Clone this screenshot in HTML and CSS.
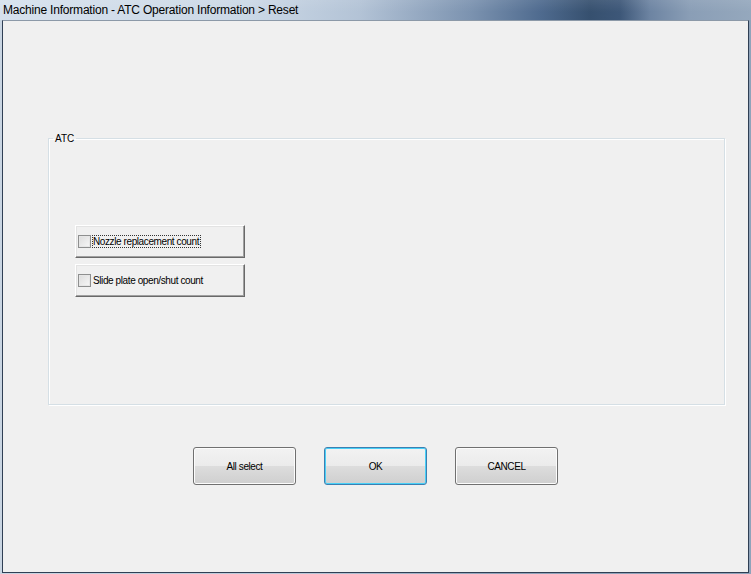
FILE: index.html
```html
<!DOCTYPE html>
<html>
<head>
<meta charset="utf-8">
<link rel="stylesheet" href="styles.css">
</head>
<body>
<div class="window">
  <div class="titlebar"><span class="title">Machine Information - ATC Operation Information &gt; Reset</span></div>
  <div class="client">
    <fieldset class="group">
      <legend class="group-label">ATC</legend>
      <div class="options">
        <label class="opt"><span class="box"></span><span class="opt-text focused">Nozzle replacement count</span></label>
        <label class="opt"><span class="box"></span><span class="opt-text">Slide plate open/shut count</span></label>
      </div>
    </fieldset>
    <div class="actions">
      <button class="btn">All select</button>
      <button class="btn default">OK</button>
      <button class="btn">CANCEL</button>
    </div>
  </div>
</div>
</body>
</html>
```
FILE: styles.css
```css
html, body {
  margin: 0;
  padding: 0;
  background: #f0f0f0;
}
.window {
  width: 751px;
  height: 574px;
  box-sizing: border-box;
  padding: 0 2px 1px 2px;
  background: linear-gradient(to right, #c9d5e2 0, #b9c8d8 300px, #8fa3ba 500px, #8fa3ba 751px);
  display: flex;
  flex-direction: column;
  font-family: "Liberation Sans", Arial, sans-serif;
}
.titlebar {
  height: 20px;
  margin: 0 -2px;
  background:
    linear-gradient(to bottom, rgba(255,255,255,0.08), rgba(255,255,255,0) 60%),
    linear-gradient(to right, #d6e1ed 0, #cbd8e6 250px, #b3c3d6 360px, #7c93b0 470px, #4f6b8f 540px, #36506f 590px, #3d5778 620px, #6d84a2 650px, #8a9eb6 690px, #95a8bd 751px);
  display: flex;
  align-items: center;
}
.title {
  padding-left: 3px;
  font-size: 12px;
  color: #000;
  letter-spacing: -0.2px;
}
.client {
  flex: 1;
  background: #f0f0f0;
  border: 1px solid #2f3f54;
  border-top-color: #8c99a8;
  display: flex;
  flex-direction: column;
}
.group {
  margin: 111px 23px 0 45px;
  padding: 0;
  border: 1px solid #d5dfe5;
  box-shadow: inset 1px 1px 0 #fff, 1px 1px 0 #fff;
  min-width: 0;
}
.group-label {
  margin-left: 4px;
  padding: 0 2px;
  font-size: 10px;
  line-height: 13px;
  color: #000;
}
.options {
  height: 259px;
  box-sizing: border-box;
  padding: 80px 0 0 26px;
  display: flex;
  flex-direction: column;
  gap: 6px;
}
.opt {
  width: 170px;
  height: 33px;
  box-sizing: border-box;
  display: flex;
  align-items: center;
  padding-left: 2px;
  background: #f0f0f0;
  border: 1px solid;
  border-color: #ffffff #696969 #696969 #ffffff;
  box-shadow: inset -1px -1px 0 #a0a0a0, inset 1px 1px 0 #e3e3e3;
}
.box {
  width: 11px;
  height: 11px;
  border: 1px solid #8e8f8f;
  background: linear-gradient(135deg, #dcdcdc, #f7f7f7);
  box-shadow: inset 0 0 0 1px #e6e6e6;
  flex: none;
}
.opt-text {
  margin-left: 1px;
  font-size: 10px;
  letter-spacing: -0.4px;
  line-height: 11px;
  color: #000;
  border: 1px dotted transparent;
  padding: 0 1px 0 0;
}
.opt-text.focused {
  border-color: #333;
}
.actions {
  margin-top: 42px;
  display: flex;
  justify-content: center;
  gap: 28px;
}
.btn {
  width: 103px;
  height: 38px;
  margin: 0;
  padding: 0;
  border: 1px solid #707070;
  border-radius: 3px;
  background: linear-gradient(to bottom, #f2f2f2 0, #ebebeb 50%, #dddddd 50%, #cfcfcf 100%);
  box-shadow: inset 0 0 0 1px #fcfcfc;
  font-family: "Liberation Sans", Arial, sans-serif;
  font-size: 10px;
  letter-spacing: -0.4px;
  color: #000;
}
.btn.default {
  border-color: #3c7fb1;
  box-shadow: inset 0 0 0 1px #48d0f7;
}
```
